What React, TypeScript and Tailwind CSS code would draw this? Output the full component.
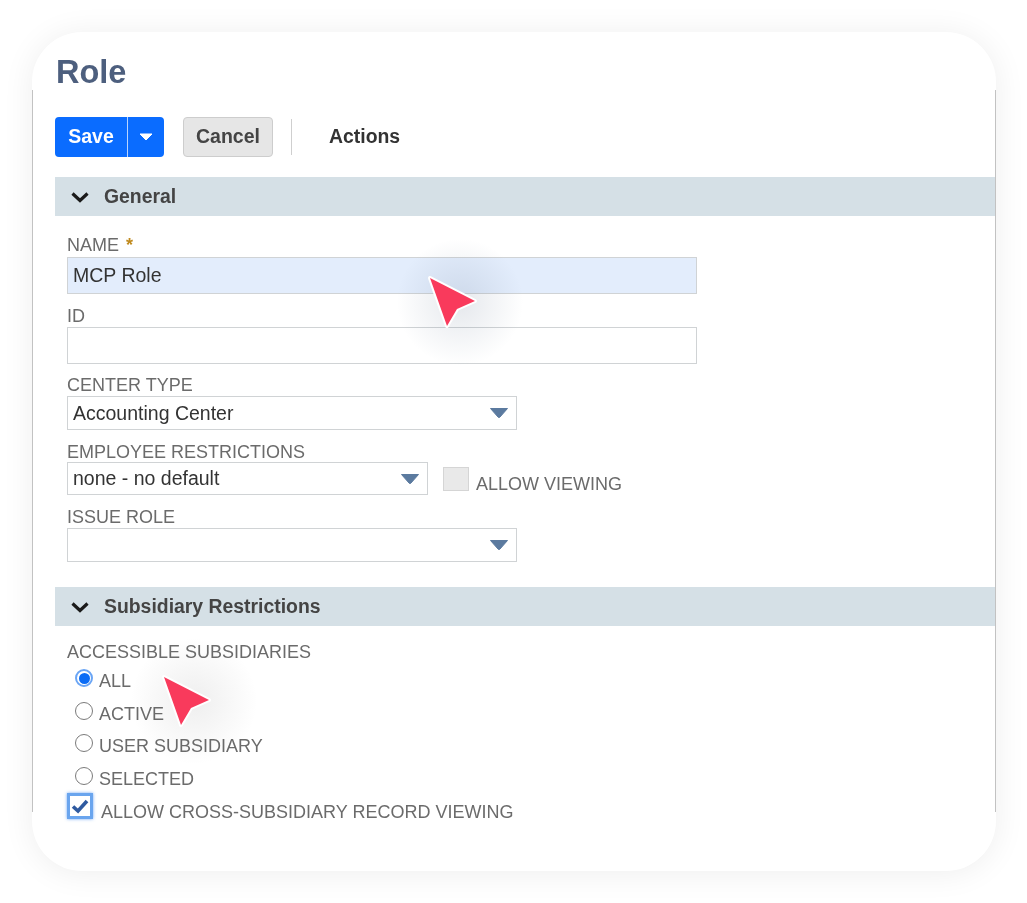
import React from "react";

const Label = ({ children, className = "" }: { children: React.ReactNode; className?: string }) => (
  <div className={`text-[18px] leading-[20px] text-[#6b6b6b] ${className}`}>{children}</div>
);

const Caret = () => (
  <svg width="20" height="12" viewBox="0 0 20 12" className="block">
    <path d="M1.5 1.5 H18.5 L11 10 Q10 11 9 10 Z" fill="#5b7a9f" stroke="#5b7a9f" strokeLinejoin="round" />
  </svg>
);

const Select = ({ value, className }: { value: string; className: string }) => (
  <div className={`flex items-center justify-between border border-[#d0d3d5] bg-white pl-[5px] pr-[7px] text-[19.5px] text-[#333] ${className}`}>
    <span className="pt-[1px]">{value}</span>
    <Caret />
  </div>
);

const Section = ({ title, className = "" }: { title: string; className?: string }) => (
  <div className={`flex h-[39px] items-center bg-[#d5e0e6] pl-[16px] ${className}`}>
    <svg width="18" height="12" viewBox="0 0 18 12" className="block">
      <path d="M1.5 2.5 L9 9.5 L16.5 2.5" fill="none" stroke="#1a1a1a" strokeWidth="3.2" />
    </svg>
    <span className="ml-[15px] text-[19.4px] font-bold text-[#444]">{title}</span>
  </div>
);

const Radio = ({ label, checked = false }: { label: string; checked?: boolean }) => (
  <div className="flex h-[32.6px] items-start pl-[8px]">
    {checked ? (
      <span className="mt-[1px] flex h-[18px] w-[18px] items-center justify-center rounded-full border-[2px] border-[#6aa5f5] bg-white">
        <span className="h-[11px] w-[11px] rounded-full bg-[#0b6cf5]" />
      </span>
    ) : (
      <span className="mt-[1px] h-[18px] w-[18px] rounded-full border-[1.5px] border-[#7a7a7a] bg-white" />
    )}
    <span className="ml-[6px] mt-[3px] text-[18px] leading-[20px] text-[#6b6b6b]">{label}</span>
  </div>
);

const Cursor = ({ className, glow }: { className: string; glow: string }) => (
  <div className={`absolute ${className}`}>
    <div className={`absolute left-[-28px] top-[-35px] h-[128px] w-[128px] rounded-full ${glow}`} />
    <svg width="56" height="58" viewBox="0 0 56 58" className="relative block">
      <path d="M6 5 L51 28 L33 36 L23 53 Z" fill="#f93a5c" stroke="#ffffff" strokeWidth="4" strokeLinejoin="round" paintOrder="stroke" />
    </svg>
  </div>
);

export default function App() {
  return (
    <div className="min-h-[903px] bg-white pl-[32px] pt-[32px] font-['Liberation_Sans',Arial,sans-serif]">
      <div className="relative h-[839px] w-[964px] rounded-[50px] bg-white shadow-[0_2px_32px_rgba(0,0,0,0.07)]">
        <div className="blur-[0.45px]">
          <div className="h-[58px] pl-[24px] pt-[20px]">
            <h1 className="text-[32.5px] font-bold leading-[40px] text-[#4d5f7e]">Role</h1>
          </div>
          <div className="h-[722px] border-x border-[#c2c2c2] pl-[22px]">
            <div className="flex items-center pt-[27px]">
              <div className="flex h-[40px] w-[109px] items-center rounded-[4px] bg-[#0a6cff] text-white">
                <span className="w-[72px] text-center text-[19.5px] font-bold">Save</span>
                <span className="h-full w-px bg-[#b9d4ff]" />
                <span className="flex flex-1 justify-center">
                  <svg width="14" height="8" viewBox="0 0 14 8"><path d="M1 1 H13 L7 7 Z" fill="#fff" stroke="#fff" strokeLinejoin="round" /></svg>
                </span>
              </div>
              <div className="ml-[19px] flex h-[40px] w-[90px] items-center justify-center rounded-[4px] border border-[#cdcdcd] bg-[#e6e6e6] text-[19.5px] font-bold text-[#444]">Cancel</div>
              <div className="ml-[18px] h-[36px] w-px bg-[#cfcfcf]" />
              <div className="ml-[37px] text-[19.4px] font-bold text-[#333]">Actions</div>
            </div>
            <Section title="General" className="mt-[20px]" />
            <div className="pl-[12px]">
              <Label className="mt-[19px]">NAME <span className="ml-[2px] font-bold text-[#c08a1e]">*</span></Label>
              <div className="mt-[2px] flex h-[37px] w-[630px] items-center border border-[#d0d3d5] bg-[#e3edfc] pl-[5px] text-[19.5px] text-[#333]">MCP Role</div>
              <Label className="mt-[12px]">ID</Label>
              <div className="mt-[1px] h-[37px] w-[630px] border border-[#d0d3d5] bg-white" />
              <Label className="mt-[11px]">CENTER TYPE</Label>
              <Select value="Accounting Center" className="mt-[1px] h-[34px] w-[450px]" />
              <Label className="mt-[12px]">EMPLOYEE RESTRICTIONS</Label>
              <div className="flex items-start">
                <Select value="none - no default" className="h-[33px] w-[361px]" />
                <span className="ml-[15px] mt-[5px] h-[24px] w-[26px] border border-[#d5d5d5] bg-[#e9e9e9]" />
                <Label className="ml-[7px] mt-[12px]">ALLOW VIEWING</Label>
              </div>
              <Label className="mt-[12px]">ISSUE ROLE</Label>
              <Select value="" className="mt-[1px] h-[34px] w-[450px]" />
            </div>
            <Section title="Subsidiary Restrictions" className="mt-[25px]" />
            <div className="pl-[12px]">
              <Label className="mt-[16px]">ACCESSIBLE SUBSIDIARIES</Label>
              <div className="mt-[6px]">
                <Radio label="ALL" checked />
                <Radio label="ACTIVE" />
                <Radio label="USER SUBSIDIARY" />
                <Radio label="SELECTED" />
              </div>
              <div className="-mt-[5px] flex items-start">
                <span className="flex h-[26px] w-[26px] items-center justify-center border-[3px] border-[#6aa5ee] bg-white shadow-[0_0_3px_rgba(50,130,240,0.7)]">
                  <svg width="18" height="16" viewBox="0 0 18 16"><path d="M2 8.5 L7 13 L16 3" fill="none" stroke="#2f5aa0" strokeWidth="3.6" /></svg>
                </span>
                <span className="ml-[8px] mt-[9px] text-[18px] leading-[20px] text-[#6b6b6b]">ALLOW CROSS-SUBSIDIARY RECORD VIEWING</span>
              </div>
            </div>
          </div>
        </div>
        <Cursor className="left-[392px] top-[241px]" glow="bg-[radial-gradient(circle,rgba(80,100,130,0.15),rgba(80,100,130,0)_70%)]" />
        <Cursor className="left-[126px] top-[640px]" glow="bg-[radial-gradient(circle,rgba(90,90,90,0.1),rgba(90,90,90,0)_70%)]" />
      </div>
    </div>
  );
}
